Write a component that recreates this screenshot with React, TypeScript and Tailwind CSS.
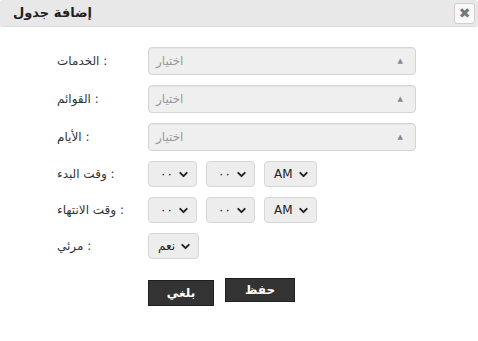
import { ChevronDown } from "lucide-react";

const font = { fontFamily: '"DejaVu Sans", "Noto Sans", sans-serif' };

function BigSelect() {
  return (
    <div className="w-[268px] h-[28px] rounded-[4px] border border-[#d4d4d4] bg-[#efefef] shadow-[inset_0_1px_1px_rgba(0,0,0,0.04)] flex items-center justify-between pl-[7px] pr-[12px]">
      <span className="text-[12px] text-[#999]">اختيار</span>
      <span className="text-[7px] text-[#888] leading-none">▲</span>
    </div>
  );
}

function SmallSelect({ value, width, spaced }: { value: string; width: string; spaced?: boolean }) {
  return (
    <div
      className={`${width} h-[26px] rounded-[4px] border border-[#d6d6d6] bg-[#ededed] flex items-center justify-between pl-[9px] pr-[6px]`}
    >
      <span className={`text-[12px] text-[#222] ${spaced ? "tracking-[3px] pl-[2px]" : ""}`}>{value}</span>
      <ChevronDown size={13} strokeWidth={3.5} className="text-[#222]" />
    </div>
  );
}

function Row({ label, children, h }: { label: string; children: React.ReactNode; h: string }) {
  return (
    <div className={`flex items-center ${h}`}>
      <div className="w-[91px] text-[12px] text-[#333]">{label}</div>
      {children}
    </div>
  );
}

function TimeSelects() {
  return (
    <div className="flex gap-[9px]">
      <SmallSelect value="٠٠" width="w-[49px]" spaced />
      <SmallSelect value="٠٠" width="w-[49px]" spaced />
      <SmallSelect value="AM" width="w-[53px]" />
    </div>
  );
}

export default function App() {
  return (
    <div className="w-[478px] h-[341px] bg-white" style={font}>
      <div className="h-[27px] bg-[#e8e8e8] border-b border-[#dedede] rounded-[3px] flex items-center justify-between pl-[13px] pr-[3px]">
        <span className="text-[13px] font-bold text-[#222]">إضافة جدول</span>
        <button className="w-[21px] h-[21px] bg-[#f8f8f8] border border-[#d0d0d0] rounded-[3px] flex items-center justify-center text-[#777] text-[14px] font-bold leading-none">
          ✖
        </button>
      </div>

      <div className="pl-[57px] pt-[20px] flex flex-col gap-[10px]">
        <Row label="الخدمات :" h="h-[28px]">
          <BigSelect />
        </Row>
        <Row label="القوائم :" h="h-[28px]">
          <BigSelect />
        </Row>
        <Row label="الأيام :" h="h-[28px]">
          <BigSelect />
        </Row>
        <Row label="وقت البدء :" h="h-[26px]">
          <TimeSelects />
        </Row>
        <Row label="وقت الانتهاء :" h="h-[26px]">
          <TimeSelects />
        </Row>
        <Row label="مرئي :" h="h-[26px]">
          <SmallSelect value="نعم" width="w-[51px]" />
        </Row>
      </div>

      <div className="pl-[148px] mt-[19px] flex items-start gap-[11px]">
        <button className="mt-[2px] w-[66px] h-[26px] bg-[#333] border border-[#1f1f1f] text-white text-[12px] font-bold flex items-end justify-center pb-[3px]">
          بلغي
        </button>
        <button className="w-[70px] h-[24px] bg-[#333] border border-[#1f1f1f] text-white text-[12px] font-bold flex items-center justify-center">
          حفظ
        </button>
      </div>
    </div>
  );
}
